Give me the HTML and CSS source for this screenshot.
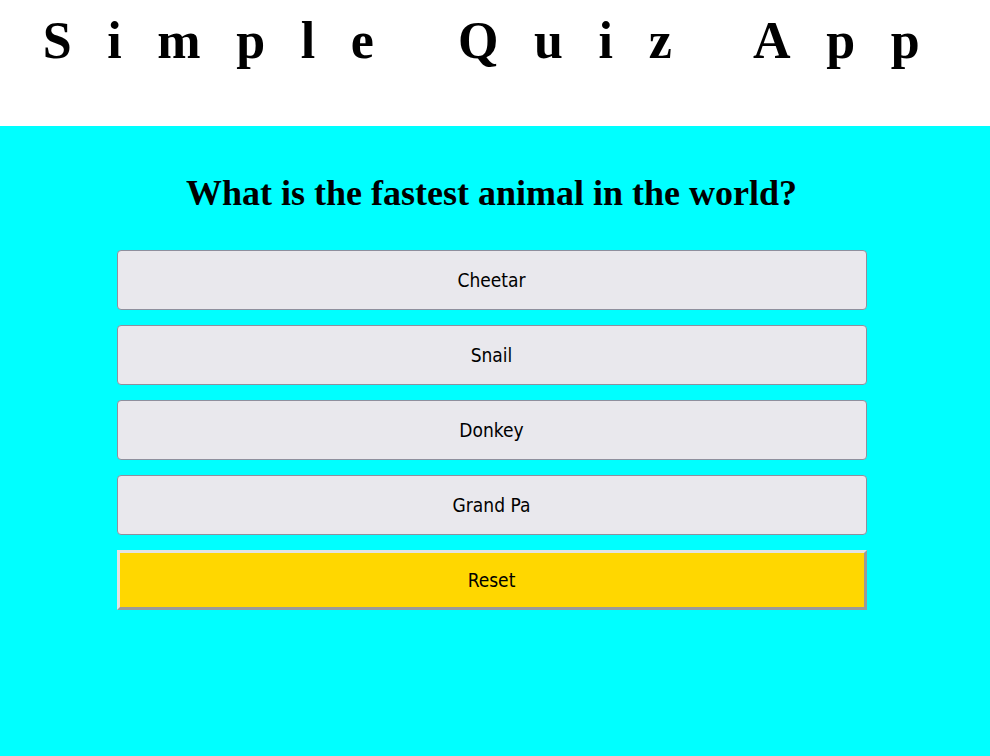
FILE: index.html
```html
<!DOCTYPE html>
<html>
<head>
<meta charset="utf-8">
<title>Simple Quiz App</title>
<link rel="stylesheet" href="styles.css">
</head>
<body>
<header class="top">
  <h1 class="title">Simple Quiz App</h1>
</header>
<main class="quiz">
  <h2 class="question">What is the fastest animal in the world?</h2>
  <div class="answers">
    <button class="answer">Cheetar</button>
    <button class="answer">Snail</button>
    <button class="answer">Donkey</button>
    <button class="answer">Grand Pa</button>
    <button class="reset">Reset</button>
  </div>
</main>
</body>
</html>
```

FILE: styles.css
```css
html, body {
  margin: 0;
  padding: 0;
  height: 100%;
}
body {
  background: #00ffff;
  font-family: "Liberation Serif", "Times New Roman", serif;
  display: flex;
  flex-direction: column;
}
.top {
  background: #ffffff;
  height: 126px;
  box-sizing: border-box;
  padding-top: 11px;
}
.title {
  margin: 0;
  padding-left: 8px;
  text-align: center;
  font-size: 52px;
  font-weight: bold;
  letter-spacing: 35.6px;
  color: #000;
}
.quiz {
  flex: 1;
  padding-right: 7px;
  display: flex;
  flex-direction: column;
  align-items: center;
}
.question {
  margin: 46px 0 0;
  font-size: 36px;
  font-weight: bold;
  text-align: center;
  color: #000;
}
.answers {
  width: 750px;
  margin-top: 36px;
  display: flex;
  flex-direction: column;
  gap: 15px;
}
.answer, .reset {
  height: 60px;
  font-family: "DejaVu Sans Condensed", "DejaVu Sans", sans-serif;
  font-stretch: condensed;
  font-size: 19px;
  color: #000;
  cursor: pointer;
}
.answer {
  background: #e9e8ed;
  border: 1px solid #8f8f9d;
  border-radius: 4px;
}
.reset {
  background: #ffd700;
  border-style: solid;
  border-width: 3px;
  border-color: #e3e3e3 #9a9a9a #9a9a9a #e3e3e3;
  border-radius: 0;
}
```
